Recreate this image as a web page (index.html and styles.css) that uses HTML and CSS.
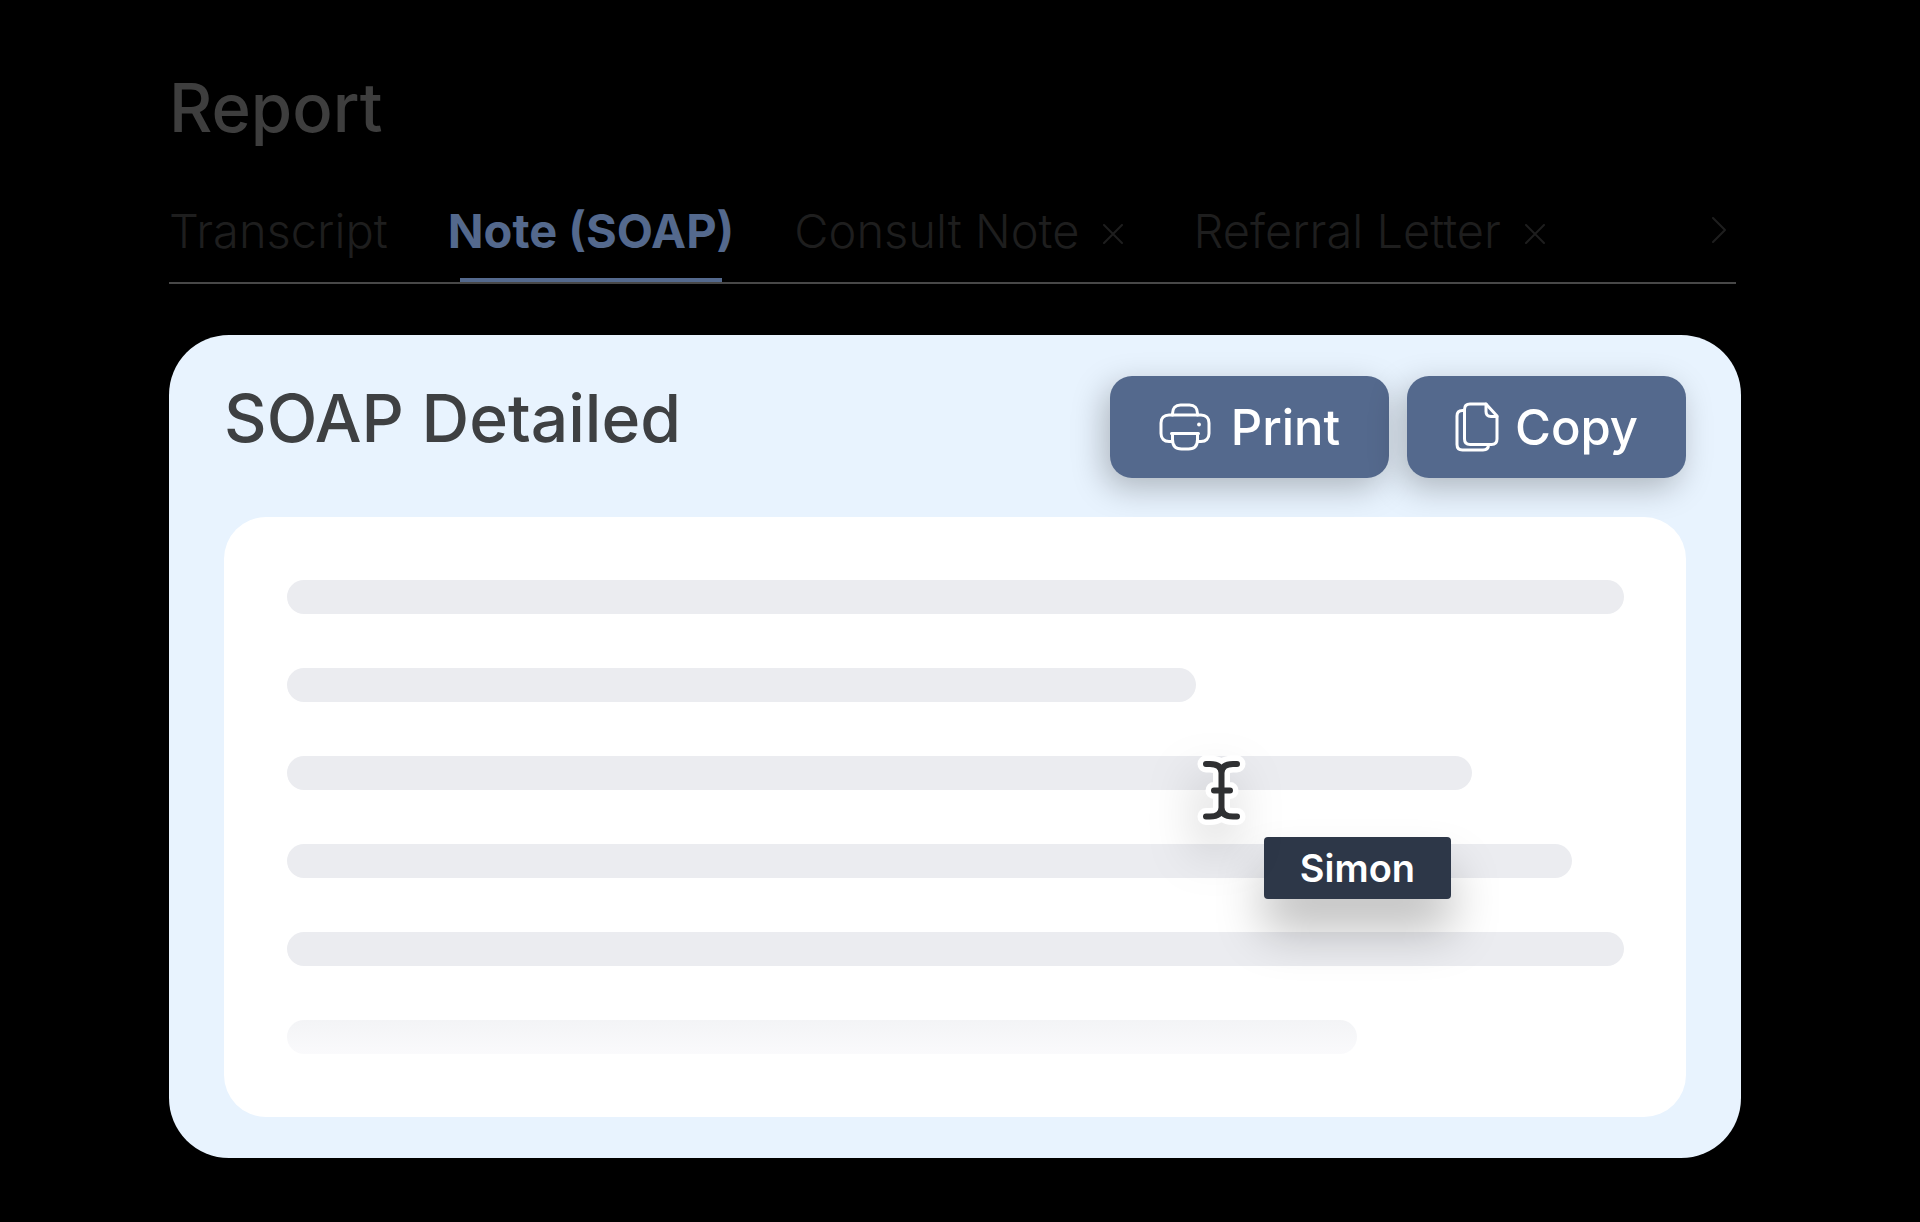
FILE: index.html
```
<!DOCTYPE html>
<html lang="en">
<head>
  <meta charset="UTF-8">
  <meta name="viewport" content="width=device-width, initial-scale=1.0">
  <title>Report</title>
  <link rel="stylesheet" href="styles.css">
</head>
<body>
  <main class="report">
    <h1 class="report-title">Report</h1>

    <nav class="tabs">
      <button class="tab">Transcript</button>
      <button class="tab active">Note (SOAP)</button>
      <div class="tab-group">
        <button class="tab">Consult Note</button>
        <button class="icon-btn" aria-label="Close Consult Note">
          <svg width="20" height="20" viewBox="0 0 20 20"><path d="M1 1L19 19M19 1L1 19"/></svg>
        </button>
      </div>
      <div class="tab-group">
        <button class="tab">Referral Letter</button>
        <button class="icon-btn" aria-label="Close Referral Letter">
          <svg width="20" height="20" viewBox="0 0 20 20"><path d="M1 1L19 19M19 1L1 19"/></svg>
        </button>
      </div>
      <button class="icon-btn next" aria-label="More tabs">
        <svg width="14" height="26" viewBox="0 0 14 26"><path d="M1 1L13 13L1 25"/></svg>
      </button>
    </nav>

    <section class="card">
      <div class="card-head">
        <h2 class="card-title">SOAP Detailed</h2>
        <div class="actions">
          <button class="action-btn">
            <svg width="52" height="48" viewBox="0 0 52 48">
              <path d="M13.500 12V10.500C13.500 5.500 16.500 2 21.500 2H30.500C35.500 2 38.500 5.500 38.500 10.500V12"/>
              <path d="M13.500 38.500H10C5 38.500 2 35.500 2 30.500V20C2 15 5 12 10 12H42C47 12 50 15 50 20V30.500C50 35.500 47 38.500 42 38.500H38.500"/>
              <path d="M12.500 30.500H39.500M13.500 30.500V36.500C13.500 42.500 16.500 46 22.500 46H29.500C35.500 46 38.500 42.500 38.500 36.500V30.500"/>
              <circle class="dot" cx="40" cy="21.500" r="1.900"/>
            </svg>
            Print
          </button>
          <button class="action-btn copy">
            <svg width="44" height="50" viewBox="0 0 44 50">
              <path d="M31 2H15C11.500 2 9.500 4 9.500 7.500V37C9.500 40.500 11.500 42.500 15 42.500H36.500C40 42.500 42 40.500 42 37V14Z"/>
              <path d="M31 2V9.500C31 13 32.500 14.500 36 14.500H42"/>
              <path d="M9.500 8.500H7.500C4 8.500 2 10.500 2 14V42.500C2 46 4 48 7.500 48H28C31.500 48 33.500 46 33.500 42.500"/>
            </svg>
            Copy
          </button>
        </div>
      </div>

      <div class="note">
        <div class="line"></div>
        <div class="line" style="width: 68%"></div>
        <div class="line" style="width: 88.600%"></div>
        <div class="line" style="width: 96.100%"></div>
        <div class="line"></div>
        <div class="line fade" style="width: 80%"></div>

        <!-- collaborator cursor -->
        <div class="cursor">
          <svg width="54" height="74" viewBox="0 0 54 74">
            <g class="halo">
              <path d="M11 9H15C22 9 26.500 11.500 26.500 18V52.500C26.500 59 22 61.500 15 61.500H11M42 9H38C31 9 26.500 11.500 26.500 18M42 61.500H38C31 61.500 26.500 59 26.500 52.500M19 35.500H35"/>
            </g>
            <path d="M11 9H15C22 9 26.500 11.500 26.500 18V52.500C26.500 59 22 61.500 15 61.500H11M42 9H38C31 9 26.500 11.500 26.500 18M42 61.500H38C31 61.500 26.500 59 26.500 52.500M19 35.500H35"/>
          </svg>
          <span class="cursor-name">Simon</span>
        </div>
      </div>
    </section>
  </main>
</body>
</html>
```
FILE: styles.css
```
* {
  box-sizing: border-box;
}
body {
  margin: 0;
  background-color: #000;
  font-family: Inter, "Liberation Sans", sans-serif;
}
button {
  font-family: inherit;
  border: none;
  background: none;
  padding: 0;
  cursor: pointer;
}
svg {
  display: block;
  flex: none;
  fill: none;
  stroke: currentColor;
  stroke-linecap: round;
  stroke-linejoin: round;
}
.report {
  padding: 68px 179px 64px 169px;
}
.report-title {
  margin: 0 0 55px;
  font-size: 67px;
  line-height: 80px;
  font-weight: 500;
  color: #3e3e3e;
}
.tabs {
  display: flex;
  align-items: flex-start;
  gap: 60px;
  margin-right: 5px;
  border-bottom: 2px solid #484848;
}
.tab {
  position: relative;
  padding-bottom: 23px;
  font-size: 47px;
  line-height: 56px;
  font-weight: 300;
  color: #1e1e1e;
  white-space: nowrap;
}
.tab.active {
  font-weight: 700;
  color: #54698d;
}
.tab.active::after {
  content: "";
  position: absolute;
  left: 12px;
  right: 12px;
  bottom: 0;
  height: 4px;
  background-color: #54698d;
}
.tab-group {
  display: flex;
  gap: 14px;
}
.icon-btn {
  height: 62px;
  padding: 0 10px;
  color: #1e1e1e;
}
.icon-btn svg {
  stroke-width: 2;
}
.icon-btn.next {
  height: 54px;
  margin-left: auto;
}
.card {
  margin-top: 51px;
  padding: 41px 55px;
  border-radius: 60px;
  background-color: #e8f3fe;
}
.card-head {
  display: flex;
  justify-content: space-between;
  margin-bottom: 39px;
}
.card-title {
  margin: 0;
  font-size: 66px;
  line-height: 84px;
  font-weight: 500;
  color: #3e4042;
}
.actions {
  display: flex;
  gap: 18px;
}
.action-btn {
  display: flex;
  align-items: center;
  justify-content: center;
  gap: 20px;
  width: 279px;
  height: 102px;
  border-radius: 22px;
  background-color: #54698d;
  color: #fff;
  font-size: 49px;
  font-weight: 500;
  box-shadow: -6px 10px 32px rgba(0, 0, 0, 0.25);
}
.action-btn.copy {
  gap: 16px;
}
.action-btn svg {
  stroke-width: 3;
}
.action-btn .dot {
  fill: #fff;
  stroke: none;
}
.note {
  position: relative;
  display: flex;
  flex-direction: column;
  gap: 54px;
  padding: 63px 62px 63px 63px;
  border-radius: 42px;
  background-color: #fff;
}
.line {
  height: 34px;
  border-radius: 17px;
  background-color: #ebecf0;
}
.line.fade {
  background: linear-gradient(#f3f4f6, #fafafc);
}
.cursor {
  position: absolute;
  top: 238px;
  left: 66.400%;
  color: #2f3032;
}
.cursor svg {
  stroke-width: 6;
  filter: drop-shadow(-6px 24px 24px rgba(0, 0, 0, 0.18));
  overflow: visible;
}
.cursor .halo {
  stroke: #fff;
  stroke-width: 17;
}
.cursor-name {
  display: block;
  margin: 8px 0 0 69px;
  padding: 0 36px;
  border-radius: 4px;
  background-color: #2d3748;
  color: #fff;
  font-size: 38px;
  line-height: 62px;
  font-weight: 600;
  box-shadow: 0 32px 48px rgba(0, 0, 0, 0.25);
}
```
